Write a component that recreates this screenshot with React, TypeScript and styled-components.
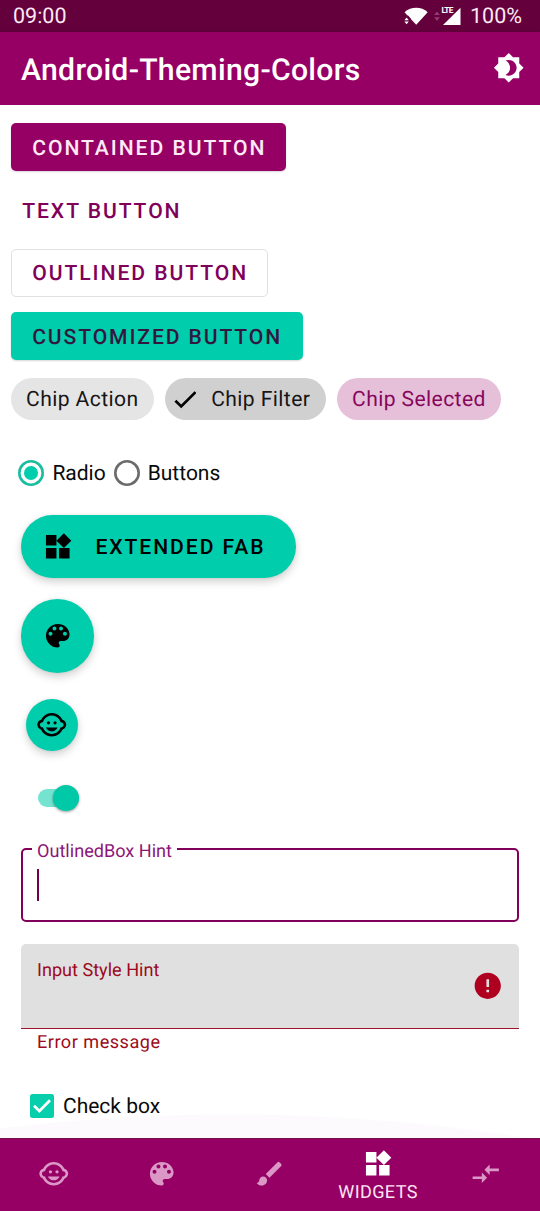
import React from "react";
import styled, { createGlobalStyle } from "styled-components";
import {
  MdBrightness4,
  MdBrush,
  MdChildCare,
  MdCompareArrows,
  MdError,
  MdWidgets,
} from "react-icons/md";

const color = {
  primary: "#960064",
  primaryDark: "#64003c",
  primaryText: "#80005a",
  secondary: "#00cdac",
  error: "#b00020",
  errorText: "#9c0a1c",
};

const GlobalStyle = createGlobalStyle`
  * { box-sizing: border-box; }
  body {
    margin: 0;
    background: #fff;
    font-family: Roboto, "Liberation Sans", sans-serif;
    color: #0a0a0a;
    text-rendering: geometricPrecision;
  }
  button { text-rendering: inherit; }
  svg { display: block; flex: none; }
`;

const Screen = styled.div`
  width: 540px;
  height: 1211px;
  display: flex;
  flex-direction: column;
  overflow: hidden;
`;

const StatusBar = styled.header`
  height: 32px;
  flex: none;
  display: flex;
  align-items: center;
  justify-content: space-between;
  padding: 2px 18px 0 13px;
  background: ${color.primaryDark};
  color: #fbe9f5;
  font-size: 21.5px;
  line-height: 32px;
`;

const StatusIcons = styled.div`
  display: flex;
  align-items: center;
`;

const Percent = styled.span`
  margin-left: 9px;
`;

const AppBar = styled.div`
  height: 73px;
  flex: none;
  display: flex;
  align-items: center;
  justify-content: space-between;
  padding: 2px 16px 0 21px;
  background: ${color.primary};
  color: #fff;
  box-shadow: 0 1px 5px rgba(0, 0, 0, 0.16);

  > svg {
    margin-bottom: 4px;
  }
`;

const Title = styled.h1`
  margin: 0;
  padding-top: 2px;
  font-size: 30.2px;
  font-weight: 500;
  line-height: 40px;
  letter-spacing: 0.28px;
`;

const Content = styled.main`
  flex: 1;
  min-height: 0;
  padding: 18px 21px 0 10.5px;
  display: flex;
  flex-direction: column;
  align-items: flex-start;
  background: radial-gradient(circle 1900px at 230px 2909px, #fcfafd 1899px, #fff 1900px);
`;

type Variant = "contained" | "text" | "outlined" | "customized";

const buttonSkins: Record<Variant, string> = {
  contained: `background: ${color.primary}; color: #fdeaf7; width: 275.5px; padding-left: 21.7px; box-shadow: 0 1px 2px rgba(0,0,0,.16);`,
  text: `background: none; color: ${color.primaryText}; width: 194px; padding-left: 11.7px;`,
  outlined: `background: #fff; color: ${color.primaryText}; width: 257.5px; padding: 1px 0 0 20.7px; border: 1.3px solid #e0e0e0;`,
  customized: `background: ${color.secondary}; color: #32173f; width: 292px; padding-left: 21.7px; letter-spacing: 1.89px; box-shadow: 0 1px 2px rgba(0,0,0,.16);`,
};

const Button = styled.button<{ $variant: Variant }>`
  height: 48px;
  margin: 0 0 15px;
  padding: 3px 0 0;
  border: 0;
  border-radius: 5px;
  text-align: left;
  font: 500 21.1px/45px Roboto, sans-serif;
  letter-spacing: 1.95px;
  white-space: nowrap;
  ${(p) => buttonSkins[p.$variant]}
`;

const ChipRow = styled.div`
  display: flex;
  gap: 10.5px;
  margin-top: 3px;
`;

const Chip = styled.div<{ $bg: string; $fg?: string; $width: number; $start?: number }>`
  width: ${(p) => p.$width}px;
  height: 42px;
  padding-left: ${(p) => p.$start ?? 15.5}px;
  border-radius: 21px;
  display: flex;
  align-items: center;
  gap: 15px;
  background: ${(p) => p.$bg};
  color: ${(p) => p.$fg ?? "#161616"};
  font-size: 21.1px;
  letter-spacing: 0.4px;
  white-space: nowrap;
`;

const RadioRow = styled.div`
  display: flex;
  align-items: center;
  height: 30px;
  margin: 38px 0 0 7.9px;
  font-size: 21px;
  line-height: 26px;
`;

const Radio = styled.span<{ $on?: boolean }>`
  width: 26px;
  height: 26px;
  margin-right: 8px;
  border-radius: 50%;
  box-shadow: inset 0 0 0 2.6px ${(p) => (p.$on ? "#1bbd9f" : "#6b6b6b")};
  display: grid;
  place-items: center;
  &::after {
    content: "";
    width: 14px;
    height: 14px;
    border-radius: 50%;
    background: ${(p) => (p.$on ? color.secondary : "transparent")};
  }
`;

const RadioLabel = styled.span`
  margin-right: 8px;
  padding-top: 1px;
`;

const Fab = styled.button<{ $size: number }>`
  width: ${(p) => p.$size}px;
  height: ${(p) => p.$size}px;
  padding: 0;
  border: 0;
  border-radius: 50%;
  display: grid;
  place-items: center;
  background: ${color.secondary};
  color: #000;
  box-shadow: 0 4px 8px rgba(0, 0, 0, 0.18), 0 0 3px rgba(0, 0, 0, 0.08);
`;

const ExtendedFab = styled(Fab)`
  width: 275.5px;
  height: 63px;
  margin: 27px 0 0 10.4px;
  padding-left: 21px;
  border-radius: 32px;
  display: flex;
  align-items: center;
  gap: 22px;
  font: 500 21.1px/30px Roboto, sans-serif;
  letter-spacing: 1.95px;
`;

const FabLabel = styled.span`
  padding-top: 2px;
`;

const LargeFab = styled(Fab)`
  margin: 21px 0 0 10.4px;
`;

const MiniFab = styled(Fab)`
  margin: 26px 0 0 15.4px;
`;

const SwitchTrack = styled.div`
  width: 41px;
  height: 18px;
  margin: 38px 0 0 27.8px;
  border-radius: 9px;
  display: flex;
  align-items: center;
  justify-content: flex-end;
  background: #74e4d0;
`;

const SwitchThumb = styled.span`
  width: 26px;
  height: 26px;
  border-radius: 50%;
  background: #00c9a8;
  box-shadow: 0 1px 3px rgba(0, 0, 0, 0.4);
`;

const OutlinedBox = styled.fieldset`
  width: 498px;
  height: 84px;
  margin: 30.5px 0 0 10.5px;
  padding: 0 0 0 9px;
  border: 2px solid ${color.primaryText};
  border-radius: 5px;
`;

const Legend = styled.legend`
  height: 22px;
  margin: 0;
  padding: 0 5px;
  font-size: 18.1px;
  line-height: 28px;
  color: #8c1678;
`;

const Caret = styled.span`
  display: block;
  width: 2px;
  height: 32px;
  margin: 9px 0 0 5px;
  background: #73004d;
`;

const FilledBox = styled.div`
  width: 498px;
  height: 85px;
  margin: 22px 0 0 10.5px;
  padding: 0 15.3px 0 16px;
  border-bottom: 1.5px solid #a0142f;
  border-radius: 5px 5px 0 0;
  display: flex;
  align-items: center;
  justify-content: space-between;
  background: #e0e0e0;
  color: ${color.error};
`;

const Hint = styled.span`
  align-self: flex-start;
  margin-top: 15.5px;
  font-size: 18.1px;
  line-height: 24px;
  color: ${color.errorText};
`;

const ErrorText = styled.div`
  margin: 2.5px 0 0 26.5px;
  font-size: 18.1px;
  line-height: 24px;
  letter-spacing: 0.5px;
  color: ${color.errorText};
`;

const CheckRow = styled.label`
  display: flex;
  align-items: center;
  gap: 9px;
  height: 30px;
  margin: 36px 0 0 19.5px;
  font-size: 21px;
`;

const CheckLabel = styled.span`
  padding-top: 2px;
`;

const CheckSquare = styled.span`
  width: 24px;
  height: 24px;
  border-radius: 2.5px;
  display: grid;
  place-items: center;
  background: #07cfac;
`;

const BottomNav = styled.nav`
  height: 73.5px;
  flex: none;
  display: grid;
  grid-template-columns: repeat(5, 1fr);
  border-top: 1px solid #75104b;
  background: ${color.primary};
`;

const NavItem = styled.div<{ $active?: boolean }>`
  display: flex;
  flex-direction: column;
  align-items: center;
  padding-top: ${(p) => (p.$active ? 9 : 19.5)}px;
  color: ${(p) => (p.$active ? "#fff" : "#db98c7")};
  font-size: 18.1px;
  line-height: 24px;
`;

const NavLabel = styled.span`
  margin-top: 2px;
  letter-spacing: 0.35px;
  color: #fbe4f3;
`;

const SignalBox = styled.div`
  position: relative;
  margin-left: 2px;
`;

const Lte = styled.span`
  position: absolute;
  left: -0.5px;
  top: 1px;
  font-size: 8.3px;
  line-height: 8px;
  font-weight: 700;
  letter-spacing: -0.7px;
  color: #fff;
`;

const WifiSlot = styled.div`
  margin-right: 6px;
`;

const WifiIcon = () => (
  <svg width="24" height="22" viewBox="0 0 24 22">
    <path d="M.5 6.2C7 .3 17.5.3 23.7 6.2L12.2 18.8z" fill="#fff" />
    <path d="M0 9.7h4.4l2 2.5v6.6H0z" fill={color.primaryDark} />
    <path d="M.4 14.2 2.6 11.6l2.2 2.6zM.4 15.6l2.2 2.6 2.2-2.6z" fill="#fff" />
  </svg>
);

const ArrowsIcon = () => (
  <svg width="6" height="22" viewBox="0 0 6 22">
    <path d="M.1 9.1 3 5.4l2.9 3.7zM.1 11.3 3 15l2.9-3.7z" fill="#913b70" />
  </svg>
);

const SignalIcon = () => (
  <svg width="19" height="22" viewBox="0 0 19 22">
    <path d="M18.5 1.8V19H1z" fill="#fff" />
  </svg>
);

const PaletteIcon = () => (
  <svg width="31.5" height="31.5" viewBox="0 0 24 24" fill="currentColor">
    <path d="M12 3c-4.97 0-9 4.03-9 9s4.03 9 9 9c.83 0 1.5-.67 1.5-1.5 0-.39-.15-.74-.39-1.01-.23-.26-.38-.61-.38-.99 0-.83.67-1.5 1.5-1.5H16c2.76 0 5-2.24 5-5 0-4.42-4.03-8-9-8zm-5.5 9c-.83 0-1.5-.67-1.5-1.5S5.67 9 6.5 9 8 9.67 8 10.5 7.33 12 6.5 12zm3-4C8.67 8 8 7.33 8 6.5S8.67 5 9.5 5s1.5.67 1.5 1.5S10.33 8 9.5 8zm5 0c-.83 0-1.5-.67-1.5-1.5S13.67 5 14.5 5s1.5.67 1.5 1.5S15.33 8 14.5 8zm3 4c-.83 0-1.5-.67-1.5-1.5S16.67 9 17.5 9s1.5.67 1.5 1.5-.67 1.5-1.5 1.5z" />
  </svg>
);

const ChipTick = () => (
  <svg width="27" height="27" viewBox="0 0 27 27" fill="none">
    <path d="M6.4 14.7 12.2 20.4 26.5 6.1" stroke="#000" strokeWidth="2.7" />
  </svg>
);

const BoxTick = () => (
  <svg width="24" height="24" viewBox="0 0 24 24" fill="none">
    <path d="M4 11.8 9.4 17 20 6.2" stroke="#fff" strokeWidth="2.7" />
  </svg>
);

export default function App() {
  return (
    <Screen>
      <GlobalStyle />
      <StatusBar>
        <span>09:00</span>
        <StatusIcons>
          <WifiSlot>
            <WifiIcon />
          </WifiSlot>
          <ArrowsIcon />
          <SignalBox>
            <SignalIcon />
            <Lte>LTE</Lte>
          </SignalBox>
          <Percent>100%</Percent>
        </StatusIcons>
      </StatusBar>
      <AppBar>
        <Title>Android-Theming-Colors</Title>
        <MdBrightness4 size={31.5} />
      </AppBar>
      <Content>
        <Button $variant="contained">CONTAINED BUTTON</Button>
        <Button $variant="text">TEXT BUTTON</Button>
        <Button $variant="outlined">OUTLINED BUTTON</Button>
        <Button $variant="customized">CUSTOMIZED BUTTON</Button>
        <ChipRow>
          <Chip $bg="#e5e5e5" $width={143.5}>Chip Action</Chip>
          <Chip $bg="#d0d0d0" $width={161.5} $start={4.7}>
            <ChipTick />
            Chip Filter
          </Chip>
          <Chip $bg="#e6c0d9" $fg="#87075c" $width={164.5}>Chip Selected</Chip>
        </ChipRow>
        <RadioRow>
          <Radio $on />
          <RadioLabel>Radio</RadioLabel>
          <Radio />
          <RadioLabel>Buttons</RadioLabel>
        </RadioRow>
        <ExtendedFab $size={63}>
          <MdWidgets size={31.5} />
          <FabLabel>EXTENDED FAB</FabLabel>
        </ExtendedFab>
        <LargeFab $size={73.5}>
          <PaletteIcon />
        </LargeFab>
        <MiniFab $size={52.5}>
          <MdChildCare size={31.5} />
        </MiniFab>
        <SwitchTrack>
          <SwitchThumb />
        </SwitchTrack>
        <OutlinedBox>
          <Legend>OutlinedBox Hint</Legend>
          <Caret />
        </OutlinedBox>
        <FilledBox>
          <Hint>Input Style Hint</Hint>
          <MdError size={31.5} />
        </FilledBox>
        <ErrorText>Error message</ErrorText>
        <CheckRow>
          <CheckSquare>
            <BoxTick />
          </CheckSquare>
          <CheckLabel>Check box</CheckLabel>
        </CheckRow>
      </Content>
      <BottomNav>
        <NavItem><MdChildCare size={31.5} /></NavItem>
        <NavItem><PaletteIcon /></NavItem>
        <NavItem><MdBrush size={31.5} /></NavItem>
        <NavItem $active>
          <MdWidgets size={31.5} />
          <NavLabel>WIDGETS</NavLabel>
        </NavItem>
        <NavItem><MdCompareArrows size={31.5} /></NavItem>
      </BottomNav>
    </Screen>
  );
}
